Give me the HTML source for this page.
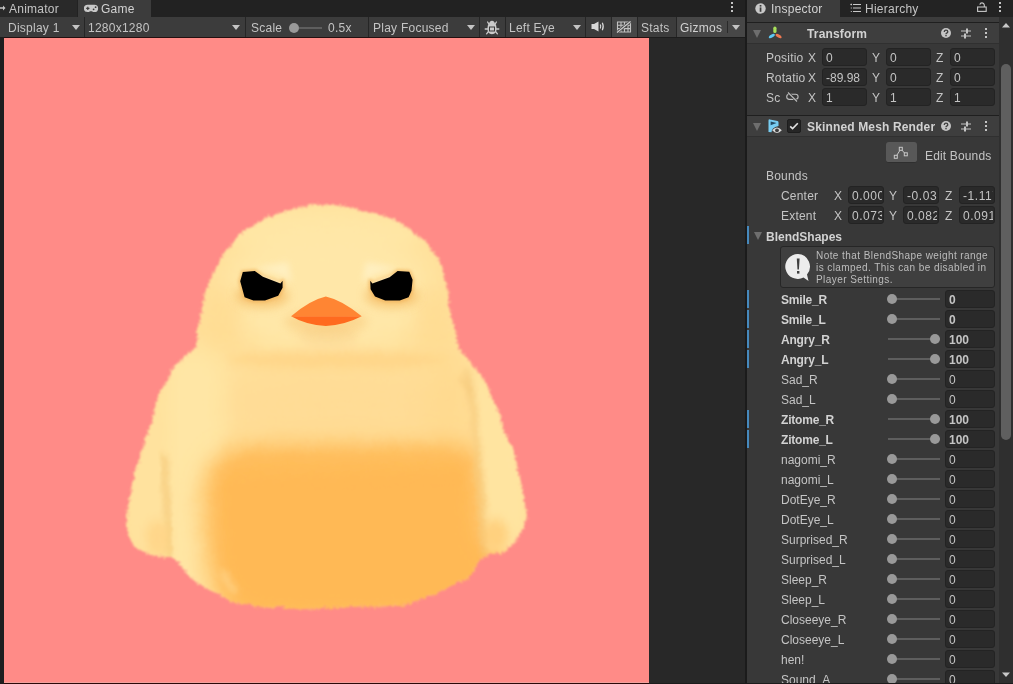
<!DOCTYPE html>
<html><head><meta charset="utf-8">
<style>
*{box-sizing:border-box;margin:0;padding:0}
html,body{width:1013px;height:684px;overflow:hidden;background:#1b1b1b;will-change:transform;font-family:"Liberation Sans",sans-serif;font-size:12px;color:#c4c4c4}
.a{position:absolute}
.t{position:absolute;white-space:nowrap;line-height:14px;margin-top:1px}
.sep{position:absolute;top:17px;height:20px;width:1px;background:#262626}
.fld{position:absolute;background:#2a2a2a;border:1px solid #232323;border-radius:3px;height:18px;overflow:hidden}
.fld span{position:absolute;left:3px;top:2px;line-height:14px;color:#c4c4c4;white-space:nowrap}
.b{font-weight:bold;color:#d2d2d2}
.bar{position:absolute;left:747px;width:2px;height:18px;background:#4689bd}
.trk{position:absolute;left:888px;width:52px;height:2px;background:#5e5e5e}
.knob{position:absolute;width:10px;height:10px;border-radius:5px;background:#999}
.dd{position:absolute;width:0;height:0;border-left:4px solid transparent;border-right:4px solid transparent;border-top:5px solid #c4c4c4}
.fo{position:absolute;width:0;height:0;border-left:4.5px solid transparent;border-right:4.5px solid transparent;border-top:8px solid #6e6e6e}
.keb{position:absolute;width:2px;height:10px;background:linear-gradient(#c4c4c4 0 2px,transparent 2px 4px,#c4c4c4 4px 6px,transparent 6px 8px,#c4c4c4 8px 10px)}
</style></head><body>
<div class="a" style="left:0;top:0;width:745px;height:17px;background:#222"></div>
<div class="a" style="left:0;top:0;width:77px;height:17px;background:#292929"></div>
<svg class="a" style="left:0;top:5px" width="6" height="6" viewBox="0 0 6 6"><path d="M0,2.3 H3 V0.5 L5.5,3 L3,5.5 V3.7 H0 Z" fill="#c4c4c4"/></svg>
<div class="t" style="left:9px;top:1px;letter-spacing:0.25px">Animator</div>
<div class="a" style="left:78px;top:0;width:73px;height:17px;background:#3c3c3c"></div>
<svg class="a" style="left:84px;top:4px" width="15" height="9" viewBox="0 0 15 9"><path d="M3.5,0.8 H10.5 A3.6,3.6 0 0 1 10.5,8 H9 L8,7.2 H6 L5,8 H3.5 A3.6,3.6 0 0 1 3.5,0.8 Z" fill="#c8c8c8"/><path d="M2.2,4.4 H5.4 M3.8,2.8 V6" stroke="#3a3a3a" stroke-width="1.2"/><circle cx="11.6" cy="3.2" r="0.9" fill="#3a3a3a"/><circle cx="9.6" cy="5.3" r="0.9" fill="#3a3a3a"/></svg>
<div class="t" style="left:101px;top:1px;color:#d2d2d2;letter-spacing:0.25px">Game</div>
<div class="keb" style="left:731px;top:2px"></div>
<div class="a" style="left:0;top:17px;width:745px;height:20px;background:#3c3c3c"></div>
<div class="a" style="left:612px;top:17px;width:25px;height:20px;background:#474747"></div>
<div class="a" style="left:677px;top:17px;width:68px;height:20px;background:#474747"></div>
<div class="sep" style="left:84px"></div>
<div class="sep" style="left:245px"></div>
<div class="sep" style="left:368px"></div>
<div class="sep" style="left:479px"></div>
<div class="sep" style="left:505px"></div>
<div class="sep" style="left:585px"></div>
<div class="sep" style="left:611px"></div>
<div class="sep" style="left:637px"></div>
<div class="sep" style="left:676px"></div>
<div class="a" style="left:727px;top:21px;width:1px;height:12px;background:#2a2a2a"></div>
<div class="t" style="left:8px;top:20px;letter-spacing:0.25px">Display 1</div>
<div class="dd" style="left:72px;top:25px"></div>
<div class="t" style="left:88px;top:20px;letter-spacing:0.25px">1280x1280</div>
<div class="dd" style="left:232px;top:25px"></div>
<div class="t" style="left:251px;top:20px;letter-spacing:0.25px">Scale</div>
<div class="a" style="left:299px;top:27px;width:23px;height:2px;background:#5e5e5e"></div>
<div class="knob" style="left:289px;top:23px"></div>
<div class="t" style="left:328px;top:20px;letter-spacing:0.25px">0.5x</div>
<div class="t" style="left:373px;top:20px;letter-spacing:0.25px">Play Focused</div>
<div class="dd" style="left:467px;top:25px"></div>
<svg class="a" style="left:484px;top:19px" width="16" height="16" viewBox="0 0 16 16"><path d="M3.6,3 L5.2,5.6 M12.4,3 L10.8,5.6 M1.2,10 H3.6 M14.8,10 H12.4 M2.6,14.8 L4.3,12.6 M13.4,14.8 L11.7,12.6" stroke="#cacaca" stroke-width="1.3" stroke-linecap="round"/><path d="M5.5,3.2 Q8,0.3 10.5,3.2 L10.8,4.6 Q12.6,5.8 12.6,9.5 Q12.6,15.2 8,15.2 Q3.4,15.2 3.4,9.5 Q3.4,5.8 5.2,4.6 Z" fill="#cacaca"/><rect x="5.5" y="8" width="5" height="4" fill="none" stroke="#3c3c3c" stroke-width="1"/></svg>
<div class="t" style="left:509px;top:20px;letter-spacing:0.25px">Left Eye</div>
<div class="dd" style="left:573px;top:25px"></div>
<svg class="a" style="left:591px;top:21px" width="14" height="11" viewBox="0 0 14 11"><path d="M0.5,3 H3 L7.5,0.5 V10.5 L3,8 H0.5 Z" fill="#d8d8d8"/><path d="M9.3,3.6 Q10.2,5.5 9.3,7.4 M11.3,1.8 Q13.2,5.5 11.3,9.2" stroke="#d8d8d8" stroke-width="1.2" fill="none"/></svg>
<svg class="a" style="left:616px;top:21px" width="16" height="12" viewBox="0 0 16 12"><path d="M1,1 H15 M1,4.3 H15 M1,7.6 H15 M1,11 H15 M1.5,1 V11 M5,1 V11 M8.5,1 V11 M12,1 V11 M14.5,1 V11" stroke="#cfcfcf" stroke-width="1.1" opacity="0.9"/><path d="M1,11.5 L14.5,0.5" stroke="#474747" stroke-width="2.6"/><path d="M1,11.5 L14.5,0.5" stroke="#cfcfcf" stroke-width="1.1"/></svg>
<div class="t" style="left:641px;top:20px;letter-spacing:0.25px">Stats</div>
<div class="t" style="left:680px;top:20px;letter-spacing:0.25px;color:#d2d2d2">Gizmos</div>
<div class="dd" style="left:732px;top:25px"></div>
<div class="a" style="left:0;top:37px;width:745px;height:647px;background:#282828"></div>
<div class="a" style="left:0;top:37px;width:4px;height:647px;background:#1e1e1e"></div>
<div class="a" style="left:0;top:37px;width:745px;height:1px;background:#1d1d1d"></div>
<div class="a" style="left:4px;top:37px;width:645px;height:1px;background:#241010"></div>
<div class="a" style="left:4px;top:38px;width:645px;height:646px;background:#ff8b87"></div>
<svg class="a" style="left:0;top:0" width="1013" height="684" viewBox="0 0 1013 684">
<defs>
<filter id="fur" x="-10%" y="-10%" width="120%" height="120%"><feTurbulence type="fractalNoise" baseFrequency="0.05" numOctaves="2" seed="8" result="n1"/><feDisplacementMap in="SourceGraphic" in2="n1" scale="5" xChannelSelector="R" yChannelSelector="G" result="d1"/><feTurbulence type="fractalNoise" baseFrequency="0.5" numOctaves="2" seed="5" result="n"/><feDisplacementMap in="d1" in2="n" scale="7" xChannelSelector="R" yChannelSelector="G" result="d"/><feGaussianBlur in="d" stdDeviation="0.8"/></filter>
<filter id="b15" x="-50%" y="-50%" width="200%" height="200%"><feGaussianBlur stdDeviation="1.5"/></filter>
<filter id="b30" x="-50%" y="-50%" width="200%" height="200%"><feGaussianBlur stdDeviation="3"/></filter>
<filter id="b50" x="-50%" y="-50%" width="200%" height="200%"><feGaussianBlur stdDeviation="5"/></filter>
<filter id="b80" x="-50%" y="-50%" width="200%" height="200%"><feGaussianBlur stdDeviation="8"/></filter>
<filter id="b100" x="-50%" y="-50%" width="200%" height="200%"><feGaussianBlur stdDeviation="10"/></filter>
<filter id="b120" x="-50%" y="-50%" width="200%" height="200%"><feGaussianBlur stdDeviation="12"/></filter>
<filter id="b160" x="-50%" y="-50%" width="200%" height="200%"><feGaussianBlur stdDeviation="16"/></filter>
<clipPath id="cp"><path d="M328.0,205.0 C336.6,205.2 343.2,205.6 354.0,208.0 C364.8,210.4 381.8,214.7 392.5,219.4 C403.2,224.1 410.3,229.4 418.0,236.0 C425.7,242.6 434.0,251.3 438.7,259.0 C443.4,266.7 444.7,275.2 446.4,282.0 C448.1,288.8 448.1,294.0 449.0,300.0 C449.9,306.0 450.8,311.3 452.0,318.0 C453.2,324.7 454.5,334.3 456.0,340.0 C457.5,345.7 458.7,348.3 461.0,352.0 C463.3,355.7 466.8,358.3 470.0,362.0 C473.2,365.7 477.0,369.7 480.0,374.0 C483.0,378.3 485.5,382.8 488.0,388.0 C490.5,393.2 492.8,399.7 495.0,405.0 C497.2,410.3 499.3,415.8 501.0,420.0 C502.7,424.2 502.7,423.7 505.0,430.0 C507.3,436.3 511.9,448.7 514.7,458.0 C517.5,467.3 519.9,476.8 521.7,486.0 C523.6,495.2 525.6,506.2 525.8,513.0 C526.0,519.8 524.6,522.3 523.0,527.0 C521.4,531.7 519.5,536.7 516.0,541.0 C512.5,545.3 507.5,550.3 502.0,553.0 C496.5,555.7 488.0,553.5 483.0,557.0 C478.0,560.5 475.8,570.0 472.0,574.0 C468.2,578.0 466.6,577.7 460.5,581.0 C454.4,584.3 444.4,590.3 435.6,594.0 C426.8,597.7 415.2,601.0 407.8,603.0 C400.4,605.0 403.6,605.2 391.0,606.0 C378.4,606.8 348.8,607.7 332.0,608.0 C315.2,608.3 302.2,608.2 290.0,608.0 C277.8,607.8 267.8,607.8 259.0,607.0 C250.2,606.2 243.8,605.2 237.0,603.0 C230.2,600.8 224.5,597.3 218.0,594.0 C211.5,590.7 203.3,586.5 198.0,583.0 C192.7,579.5 190.2,577.3 186.0,573.0 C181.8,568.7 177.9,559.8 173.0,557.0 C168.1,554.2 162.2,557.2 156.7,556.0 C151.2,554.8 144.4,552.5 140.0,550.0 C135.6,547.5 132.5,544.8 130.3,541.0 C128.1,537.2 127.2,531.7 126.7,527.0 C126.2,522.3 126.7,519.8 127.5,513.0 C128.3,506.2 129.6,495.2 131.7,486.0 C133.8,476.8 137.3,467.3 140.0,458.0 C142.7,448.7 145.9,436.3 148.0,430.0 C150.1,423.7 151.3,424.2 152.5,420.0 C153.7,415.8 153.4,410.3 155.0,405.0 C156.6,399.7 159.1,393.8 162.0,388.0 C164.9,382.2 168.8,375.3 172.6,370.0 C176.4,364.7 181.3,359.7 185.0,356.0 C188.7,352.3 193.0,351.5 195.0,348.0 C197.0,344.5 196.4,340.0 197.2,335.0 C198.0,330.0 199.1,323.8 200.0,318.0 C200.9,312.2 200.8,306.0 202.5,300.0 C204.2,294.0 207.0,288.8 210.0,282.0 C213.0,275.2 215.8,266.7 220.5,259.0 C225.2,251.3 231.2,242.6 238.5,236.0 C245.8,229.4 253.3,224.3 264.0,219.4 C274.7,214.5 292.0,208.9 302.7,206.5 C313.4,204.1 319.4,204.8 328.0,205.0Z"/></clipPath>
</defs>
<g filter="url(#fur)">
<path d="M328.0,205.0 C336.6,205.2 343.2,205.6 354.0,208.0 C364.8,210.4 381.8,214.7 392.5,219.4 C403.2,224.1 410.3,229.4 418.0,236.0 C425.7,242.6 434.0,251.3 438.7,259.0 C443.4,266.7 444.7,275.2 446.4,282.0 C448.1,288.8 448.1,294.0 449.0,300.0 C449.9,306.0 450.8,311.3 452.0,318.0 C453.2,324.7 454.5,334.3 456.0,340.0 C457.5,345.7 458.7,348.3 461.0,352.0 C463.3,355.7 466.8,358.3 470.0,362.0 C473.2,365.7 477.0,369.7 480.0,374.0 C483.0,378.3 485.5,382.8 488.0,388.0 C490.5,393.2 492.8,399.7 495.0,405.0 C497.2,410.3 499.3,415.8 501.0,420.0 C502.7,424.2 502.7,423.7 505.0,430.0 C507.3,436.3 511.9,448.7 514.7,458.0 C517.5,467.3 519.9,476.8 521.7,486.0 C523.6,495.2 525.6,506.2 525.8,513.0 C526.0,519.8 524.6,522.3 523.0,527.0 C521.4,531.7 519.5,536.7 516.0,541.0 C512.5,545.3 507.5,550.3 502.0,553.0 C496.5,555.7 488.0,553.5 483.0,557.0 C478.0,560.5 475.8,570.0 472.0,574.0 C468.2,578.0 466.6,577.7 460.5,581.0 C454.4,584.3 444.4,590.3 435.6,594.0 C426.8,597.7 415.2,601.0 407.8,603.0 C400.4,605.0 403.6,605.2 391.0,606.0 C378.4,606.8 348.8,607.7 332.0,608.0 C315.2,608.3 302.2,608.2 290.0,608.0 C277.8,607.8 267.8,607.8 259.0,607.0 C250.2,606.2 243.8,605.2 237.0,603.0 C230.2,600.8 224.5,597.3 218.0,594.0 C211.5,590.7 203.3,586.5 198.0,583.0 C192.7,579.5 190.2,577.3 186.0,573.0 C181.8,568.7 177.9,559.8 173.0,557.0 C168.1,554.2 162.2,557.2 156.7,556.0 C151.2,554.8 144.4,552.5 140.0,550.0 C135.6,547.5 132.5,544.8 130.3,541.0 C128.1,537.2 127.2,531.7 126.7,527.0 C126.2,522.3 126.7,519.8 127.5,513.0 C128.3,506.2 129.6,495.2 131.7,486.0 C133.8,476.8 137.3,467.3 140.0,458.0 C142.7,448.7 145.9,436.3 148.0,430.0 C150.1,423.7 151.3,424.2 152.5,420.0 C153.7,415.8 153.4,410.3 155.0,405.0 C156.6,399.7 159.1,393.8 162.0,388.0 C164.9,382.2 168.8,375.3 172.6,370.0 C176.4,364.7 181.3,359.7 185.0,356.0 C188.7,352.3 193.0,351.5 195.0,348.0 C197.0,344.5 196.4,340.0 197.2,335.0 C198.0,330.0 199.1,323.8 200.0,318.0 C200.9,312.2 200.8,306.0 202.5,300.0 C204.2,294.0 207.0,288.8 210.0,282.0 C213.0,275.2 215.8,266.7 220.5,259.0 C225.2,251.3 231.2,242.6 238.5,236.0 C245.8,229.4 253.3,224.3 264.0,219.4 C274.7,214.5 292.0,208.9 302.7,206.5 C313.4,204.1 319.4,204.8 328.0,205.0Z" fill="#ffe09a"/>
<g clip-path="url(#cp)">
<ellipse cx="325" cy="232" rx="100" ry="26" fill="#ffe6a4" filter="url(#b100)"/>
<ellipse cx="327" cy="292" rx="108" ry="62" fill="#ffe7a8" filter="url(#b120)"/>
<ellipse cx="222" cy="318" rx="18" ry="34" fill="#ffdc92" opacity="0.8" filter="url(#b100)"/>
<ellipse cx="434" cy="318" rx="18" ry="34" fill="#ffdc92" opacity="0.8" filter="url(#b100)"/>
<ellipse cx="345" cy="405" rx="130" ry="38" fill="#ffdc95" filter="url(#b160)"/>
<ellipse cx="338" cy="360" rx="112" ry="8" fill="#ffd486" opacity="0.85" filter="url(#b50)"/>
<ellipse cx="328" cy="336" rx="30" ry="10" fill="#fbd590" opacity="0.6" filter="url(#b50)"/>
<rect x="165" y="350" width="58" height="265" rx="20" fill="#ffe6a5" filter="url(#b100)"/>
<ellipse cx="448" cy="405" rx="22" ry="50" fill="#ffd98e" opacity="0.8" filter="url(#b120)"/>
<path d="M203,500 C203,462 225,447 262,446 L455,445 C476,445 482,455 483,478 L486,540 L500,545 L510,570 L470,625 L245,625 C226,612 214,598 208,570 Z" fill="#ffb955" filter="url(#b120)"/>
<path d="M225,470 C235,455 262,452 300,453 L450,452 L455,470 L230,478 Z" fill="#ffbd5c" opacity="0.6" filter="url(#b80)"/>
<path d="M222,572 L236,592" stroke="#ffe0a0" stroke-width="6" opacity="0.6" filter="url(#b30)"/>
<path d="M127,510 Q130,460 160,400 Q166,470 170,556 Q145,556 132,540 Z" fill="#ffe29e" filter="url(#b30)"/>
<path d="M163,455 Q168,500 169,556" stroke="#f0bf6c" stroke-width="4" fill="none" opacity="0.9" filter="url(#b30)"/>
<ellipse cx="158" cy="538" rx="11" ry="18" fill="#ffd282" opacity="0.7" filter="url(#b50)"/>
<path d="M470,362 Q505,400 522,470 Q530,520 515,548 L486,552 Q480,450 470,362 Z" fill="#ffe4a0" filter="url(#b50)"/>
<path d="M468,370 Q480,460 484,556" stroke="#f2c070" stroke-width="3.5" fill="none" opacity="0.9" filter="url(#b30)"/>
<ellipse cx="496" cy="535" rx="12" ry="16" fill="#ffc870" opacity="0.7" filter="url(#b50)"/>
<path d="M460,378 Q470,390 472,395" stroke="#f2c070" stroke-width="3" fill="none" opacity="0.7" filter="url(#b30)"/>
</g></g>
<ellipse cx="262" cy="296" rx="27" ry="12" fill="#f5bd66" opacity="0.7" filter="url(#b50)"/>
<ellipse cx="392" cy="296" rx="27" ry="12" fill="#f5bd66" opacity="0.7" filter="url(#b50)"/>
<path d="M255,268 Q275,272 292,282 L288,262 Z" fill="#fff2c8" opacity="0.75" filter="url(#b30)"/>
<path d="M398,268 Q378,272 362,282 L366,262 Z" fill="#fff2c8" opacity="0.75" filter="url(#b30)"/>
<path d="M242.8,272 L254.8,271 L262.9,276.8 L280.4,283.4 L282.6,280.8 L282.6,287.8 L278.2,295.8 L265,300.5 L253.4,300.5 L244.6,297.3 L240.2,281.2 Z" fill="none" stroke="#f0b058" stroke-width="4" stroke-linejoin="round" opacity="0.6" filter="url(#b15)"/>
<path d="M370.2,280.8 L372.4,283.4 L389.6,277.2 L397.6,271 L409.3,271.7 L412.6,279.7 L411.5,290.7 L408.6,297.3 L399.8,300.5 L385.2,300.5 L375,296.5 L370.6,289.2 Z" fill="none" stroke="#f0b058" stroke-width="4" stroke-linejoin="round" opacity="0.6" filter="url(#b15)"/>
<path d="M258,276 L281,284" stroke="#fff2c8" stroke-width="3" opacity="0.9" filter="url(#b15)"/>
<path d="M395,276 L372,284" stroke="#fff2c8" stroke-width="3" opacity="0.9" filter="url(#b15)"/>
<ellipse cx="326" cy="322" rx="42" ry="12" fill="#f6c474" opacity="0.45" filter="url(#b50)"/>
<path d="M242.8,272 L254.8,271 L262.9,276.8 L280.4,283.4 L282.6,280.8 L282.6,287.8 L278.2,295.8 L265,300.5 L253.4,300.5 L244.6,297.3 L240.2,281.2 Z" fill="#000"/>
<path d="M370.2,280.8 L372.4,283.4 L389.6,277.2 L397.6,271 L409.3,271.7 L412.6,279.7 L411.5,290.7 L408.6,297.3 L399.8,300.5 L385.2,300.5 L375,296.5 L370.6,289.2 Z" fill="#000"/>
<path d="M291.1,316.3 Q310,300 325.8,296.5 Q342,300 361.7,316.3 Z" fill="#ff8533"/>
<path d="M291.1,316.3 L361.7,316.3 Q345,325 325.8,326 Q306,325 291.1,316.3 Z" fill="#ff6a1f"/>
</svg>
<div class="a" style="left:747px;top:0;width:266px;height:684px;background:#383838"></div>
<div class="a" style="left:747px;top:0;width:266px;height:17px;background:#232323"></div>
<div class="a" style="left:747px;top:0;width:93px;height:22px;background:#3c3c3c"></div>
<div class="a" style="left:840px;top:17px;width:173px;height:5px;background:#3c3c3c"></div>
<svg class="a" style="left:755px;top:3px" width="11" height="11" viewBox="0 0 11 11"><circle cx="5.5" cy="5.5" r="5.2" fill="#c8c8c8"/><rect x="4.7" y="4.4" width="1.7" height="4.4" fill="#3c3c3c"/><rect x="4.7" y="2" width="1.7" height="1.6" fill="#3c3c3c"/></svg>
<div class="t" style="left:771px;top:1px;color:#d2d2d2;letter-spacing:0.25px">Inspector</div>
<svg class="a" style="left:850px;top:3px" width="11" height="10" viewBox="0 0 11 10"><path d="M3,1.5 H11 M3,5 H11 M3,8.5 H11" stroke="#c8c8c8" stroke-width="1.2"/><path d="M0.5,1.5 H2 M1.25,0.7 V2.3 M0.8,5 H1.8 M0.8,8.5 H1.8" stroke="#c8c8c8" stroke-width="1"/></svg>
<div class="t" style="left:865px;top:1px;letter-spacing:0.25px">Hierarchy</div>
<svg class="a" style="left:977px;top:2px" width="10" height="10" viewBox="0 0 10 10"><rect x="0.6" y="5" width="8.6" height="4.4" fill="none" stroke="#c8c8c8" stroke-width="1.1"/><path d="M7.3,5 V2.8 A2.3,2.3 0 0 0 2.8,2.6" fill="none" stroke="#c8c8c8" stroke-width="1.1"/></svg>
<div class="keb" style="left:999px;top:2px"></div>
<div class="a" style="left:747px;top:22px;width:252px;height:1px;background:#1f1f1f"></div>
<div class="a" style="left:747px;top:23px;width:252px;height:20px;background:#3e3e3e"></div>
<div class="a" style="left:747px;top:43px;width:252px;height:1px;background:#303030"></div>
<div class="fo" style="left:753px;top:30px"></div>
<svg class="a" style="left:768px;top:26px" width="15" height="14" viewBox="0 0 15 14"><rect x="5.3" y="0.6" width="3.2" height="6.5" rx="1.6" fill="#a8e05a"/><ellipse cx="3.8" cy="10" rx="3.4" ry="1.5" transform="rotate(-32 3.8 10)" fill="#5ec8f2"/><ellipse cx="10.6" cy="10" rx="3.4" ry="1.5" transform="rotate(32 10.6 10)" fill="#f07850"/></svg>
<div class="t b" style="left:807px;top:26px;letter-spacing:0.15px">Transform</div>
<svg class="a" style="left:941px;top:28px" width="10" height="10" viewBox="0 0 10 10"><circle cx="5" cy="5" r="5" fill="#c4c4c4"/><path d="M3.3,3.9 Q3.3,2.2 5,2.2 Q6.8,2.2 6.8,3.7 Q6.8,4.6 5.6,5.1 Q5,5.4 5,6.3" fill="none" stroke="#3e3e3e" stroke-width="1.3"/><rect x="4.3" y="7" width="1.4" height="1.3" fill="#3e3e3e"/></svg>
<svg class="a" style="left:961px;top:28px" width="10" height="11" viewBox="0 0 10 11"><path d="M0,3 H5 M7,3 H10 M0,8 H3 M5,8 H10" stroke="#c4c4c4" stroke-width="1.2"/><rect x="5" y="0.5" width="2" height="5" fill="#c4c4c4"/><rect x="3" y="5.5" width="2" height="5" fill="#c4c4c4"/></svg>
<div class="keb" style="left:985px;top:28px"></div>
<div class="t" style="left:766px;top:50px;letter-spacing:0.2px">Positio</div>
<div class="t" style="left:808px;top:50px">X</div>
<div class="fld" style="left:822px;top:48px;width:45px"><span>0</span></div>
<div class="t" style="left:872px;top:50px">Y</div>
<div class="fld" style="left:886px;top:48px;width:45px"><span>0</span></div>
<div class="t" style="left:936px;top:50px">Z</div>
<div class="fld" style="left:950px;top:48px;width:45px"><span>0</span></div>
<div class="t" style="left:766px;top:70px;letter-spacing:0.2px">Rotatio</div>
<div class="t" style="left:808px;top:70px">X</div>
<div class="fld" style="left:822px;top:68px;width:45px"><span>-89.98</span></div>
<div class="t" style="left:872px;top:70px">Y</div>
<div class="fld" style="left:886px;top:68px;width:45px"><span>0</span></div>
<div class="t" style="left:936px;top:70px">Z</div>
<div class="fld" style="left:950px;top:68px;width:45px"><span>0</span></div>
<div class="t" style="left:766px;top:90px;letter-spacing:0.2px">Sc</div>
<div class="t" style="left:808px;top:90px">X</div>
<div class="fld" style="left:822px;top:88px;width:45px"><span>1</span></div>
<div class="t" style="left:872px;top:90px">Y</div>
<div class="fld" style="left:886px;top:88px;width:45px"><span>1</span></div>
<div class="t" style="left:936px;top:90px">Z</div>
<div class="fld" style="left:950px;top:88px;width:45px"><span>1</span></div>
<svg class="a" style="left:786px;top:92px" width="13" height="10" viewBox="0 0 13 10"><rect x="0.7" y="2.2" width="11.4" height="5.2" rx="2.6" fill="none" stroke="#bdbdbd" stroke-width="1.1"/><path d="M2,0.5 L11,9.5" stroke="#383838" stroke-width="2.4"/><path d="M2,0.5 L11,9.5" stroke="#bdbdbd" stroke-width="1.1"/></svg>
<div class="a" style="left:747px;top:115px;width:252px;height:1px;background:#1f1f1f"></div>
<div class="a" style="left:747px;top:116px;width:252px;height:20px;background:#3e3e3e"></div>
<div class="a" style="left:747px;top:136px;width:252px;height:1px;background:#303030"></div>
<div class="fo" style="left:753px;top:123px"></div>
<svg class="a" style="left:767px;top:118px" width="17" height="17" viewBox="0 0 17 17"><path d="M1.5,14 V2.5 Q1.5,1.2 2.8,1.4 L10.5,3 Q11.5,3.2 11.5,4.2 V8 Q8,8.5 6,10.5 Q4.5,12 4.5,14.2 Z" fill="#78cdf2"/><path d="M3.6,3.4 L9.6,5 L3.6,7.2 Z" fill="#234a63"/><path d="M5.2,12.3 Q10,6.8 14.8,12.3 Q10,17.5 5.2,12.3 Z" fill="#d9d9d9"/><circle cx="10" cy="12.3" r="1.9" fill="#3e3e3e"/></svg><div class="a" style="left:787px;top:119px;width:14px;height:14px;background:#262626;border:1px solid #1d1d1d;border-radius:2px"></div><svg class="a" style="left:787px;top:119px" width="14" height="14" viewBox="0 0 14 14"><path d="M3.2,7.3 L5.6,9.6 L10.8,4.2" fill="none" stroke="#e4e4e4" stroke-width="1.6"/></svg>
<div class="t b" style="left:807px;top:119px;letter-spacing:0.15px">Skinned Mesh Render</div>
<svg class="a" style="left:941px;top:121px" width="10" height="10" viewBox="0 0 10 10"><circle cx="5" cy="5" r="5" fill="#c4c4c4"/><path d="M3.3,3.9 Q3.3,2.2 5,2.2 Q6.8,2.2 6.8,3.7 Q6.8,4.6 5.6,5.1 Q5,5.4 5,6.3" fill="none" stroke="#3e3e3e" stroke-width="1.3"/><rect x="4.3" y="7" width="1.4" height="1.3" fill="#3e3e3e"/></svg>
<svg class="a" style="left:961px;top:121px" width="10" height="11" viewBox="0 0 10 11"><path d="M0,3 H5 M7,3 H10 M0,8 H3 M5,8 H10" stroke="#c4c4c4" stroke-width="1.2"/><rect x="5" y="0.5" width="2" height="5" fill="#c4c4c4"/><rect x="3" y="5.5" width="2" height="5" fill="#c4c4c4"/></svg>
<div class="keb" style="left:985px;top:121px"></div>
<div class="a" style="left:886px;top:142px;width:31px;height:21px;border-radius:3px;background:#585858;border-bottom:1px solid #2f2f2f"></div>
<svg class="a" style="left:893px;top:146px" width="16" height="14" viewBox="0 0 16 14"><path d="M3,10.5 L7.8,3 L12.5,8" fill="none" stroke="#c8c8c8" stroke-width="1"/><rect x="6.3" y="1.3" width="3" height="3" fill="#585858" stroke="#c8c8c8" stroke-width="1"/><rect x="1.3" y="9.3" width="3" height="3" fill="#585858" stroke="#c8c8c8" stroke-width="1"/><rect x="11.3" y="6.8" width="3" height="3" fill="#585858" stroke="#c8c8c8" stroke-width="1"/></svg>
<div class="t" style="left:925px;top:148px;letter-spacing:0.15px">Edit Bounds</div>
<div class="t" style="left:766px;top:168px;letter-spacing:0.2px">Bounds</div>
<div class="t" style="left:781px;top:188px;letter-spacing:0.2px">Center</div>
<div class="t" style="left:834px;top:188px">X</div>
<div class="fld" style="left:848px;top:186px;width:36px"><span style="top:2px;width:30px;overflow:hidden;letter-spacing:0.55px">0.000</span></div>
<div class="t" style="left:889px;top:188px">Y</div>
<div class="fld" style="left:903px;top:186px;width:36px"><span style="top:2px;width:30px;overflow:hidden;letter-spacing:0.55px">-0.03</span></div>
<div class="t" style="left:945px;top:188px">Z</div>
<div class="fld" style="left:959px;top:186px;width:36px"><span style="top:2px;width:30px;overflow:hidden;letter-spacing:0.55px">-1.117</span></div>
<div class="t" style="left:781px;top:208px;letter-spacing:0.2px">Extent</div>
<div class="t" style="left:834px;top:208px">X</div>
<div class="fld" style="left:848px;top:206px;width:36px"><span style="top:2px;width:30px;overflow:hidden;letter-spacing:0.55px">0.073</span></div>
<div class="t" style="left:889px;top:208px">Y</div>
<div class="fld" style="left:903px;top:206px;width:36px"><span style="top:2px;width:30px;overflow:hidden;letter-spacing:0.55px">0.082</span></div>
<div class="t" style="left:945px;top:208px">Z</div>
<div class="fld" style="left:959px;top:206px;width:36px"><span style="top:2px;width:30px;overflow:hidden;letter-spacing:0.55px">0.091</span></div>
<div class="bar" style="top:226px;height:18px"></div>
<div class="fo" style="left:754px;top:232px"></div>
<div class="t b" style="left:766px;top:229px">BlendShapes</div>
<div class="a" style="left:780px;top:246px;width:215px;height:42px;border-radius:3px;background:#3f3f3f;border:1px solid #262626"></div>
<svg class="a" style="left:785px;top:253px" width="28" height="29" viewBox="0 0 28 29"><path d="M13,1 A12.5,12.5 0 1 0 18.5,24.6 L23.5,28 L22,21.5 A12.5,12.5 0 0 0 13,1 Z" fill="#ececec"/><path d="M11.8,5.5 H14.6 L13.9,16.5 H12.5 Z" fill="#3f3f3f"/><rect x="12" y="18" width="2.4" height="2.6" fill="#3f3f3f"/></svg>
<div class="a" style="left:816px;top:250px;font-size:10px;line-height:11.85px;letter-spacing:0.43px;color:#bdbdbd;white-space:nowrap">Note that BlendShape weight range<br>is clamped. This can be disabled in<br>Player Settings.</div>
<div class="bar" style="top:290px"></div>
<div class="t b" style="left:781px;top:292px;letter-spacing:-0.2px">Smile_R</div>
<div class="trk" style="top:298px"></div>
<div class="knob" style="left:887px;top:294px"></div>
<div class="fld" style="left:945px;top:290px;width:50px"><span class="b">0</span></div>
<div class="bar" style="top:310px"></div>
<div class="t b" style="left:781px;top:312px;letter-spacing:-0.2px">Smile_L</div>
<div class="trk" style="top:318px"></div>
<div class="knob" style="left:887px;top:314px"></div>
<div class="fld" style="left:945px;top:310px;width:50px"><span class="b">0</span></div>
<div class="bar" style="top:330px"></div>
<div class="t b" style="left:781px;top:332px;letter-spacing:-0.2px">Angry_R</div>
<div class="trk" style="top:338px"></div>
<div class="knob" style="left:930px;top:334px"></div>
<div class="fld" style="left:945px;top:330px;width:50px"><span class="b">100</span></div>
<div class="bar" style="top:350px"></div>
<div class="t b" style="left:781px;top:352px;letter-spacing:-0.2px">Angry_L</div>
<div class="trk" style="top:358px"></div>
<div class="knob" style="left:930px;top:354px"></div>
<div class="fld" style="left:945px;top:350px;width:50px"><span class="b">100</span></div>
<div class="t" style="left:781px;top:372px">Sad_R</div>
<div class="trk" style="top:378px"></div>
<div class="knob" style="left:887px;top:374px"></div>
<div class="fld" style="left:945px;top:370px;width:50px"><span class="">0</span></div>
<div class="t" style="left:781px;top:392px">Sad_L</div>
<div class="trk" style="top:398px"></div>
<div class="knob" style="left:887px;top:394px"></div>
<div class="fld" style="left:945px;top:390px;width:50px"><span class="">0</span></div>
<div class="bar" style="top:410px"></div>
<div class="t b" style="left:781px;top:412px;letter-spacing:-0.2px">Zitome_R</div>
<div class="trk" style="top:418px"></div>
<div class="knob" style="left:930px;top:414px"></div>
<div class="fld" style="left:945px;top:410px;width:50px"><span class="b">100</span></div>
<div class="bar" style="top:430px"></div>
<div class="t b" style="left:781px;top:432px;letter-spacing:-0.2px">Zitome_L</div>
<div class="trk" style="top:438px"></div>
<div class="knob" style="left:930px;top:434px"></div>
<div class="fld" style="left:945px;top:430px;width:50px"><span class="b">100</span></div>
<div class="t" style="left:781px;top:452px">nagomi_R</div>
<div class="trk" style="top:458px"></div>
<div class="knob" style="left:887px;top:454px"></div>
<div class="fld" style="left:945px;top:450px;width:50px"><span class="">0</span></div>
<div class="t" style="left:781px;top:472px">nagomi_L</div>
<div class="trk" style="top:478px"></div>
<div class="knob" style="left:887px;top:474px"></div>
<div class="fld" style="left:945px;top:470px;width:50px"><span class="">0</span></div>
<div class="t" style="left:781px;top:492px">DotEye_R</div>
<div class="trk" style="top:498px"></div>
<div class="knob" style="left:887px;top:494px"></div>
<div class="fld" style="left:945px;top:490px;width:50px"><span class="">0</span></div>
<div class="t" style="left:781px;top:512px">DotEye_L</div>
<div class="trk" style="top:518px"></div>
<div class="knob" style="left:887px;top:514px"></div>
<div class="fld" style="left:945px;top:510px;width:50px"><span class="">0</span></div>
<div class="t" style="left:781px;top:532px">Surprised_R</div>
<div class="trk" style="top:538px"></div>
<div class="knob" style="left:887px;top:534px"></div>
<div class="fld" style="left:945px;top:530px;width:50px"><span class="">0</span></div>
<div class="t" style="left:781px;top:552px">Surprised_L</div>
<div class="trk" style="top:558px"></div>
<div class="knob" style="left:887px;top:554px"></div>
<div class="fld" style="left:945px;top:550px;width:50px"><span class="">0</span></div>
<div class="t" style="left:781px;top:572px">Sleep_R</div>
<div class="trk" style="top:578px"></div>
<div class="knob" style="left:887px;top:574px"></div>
<div class="fld" style="left:945px;top:570px;width:50px"><span class="">0</span></div>
<div class="t" style="left:781px;top:592px">Sleep_L</div>
<div class="trk" style="top:598px"></div>
<div class="knob" style="left:887px;top:594px"></div>
<div class="fld" style="left:945px;top:590px;width:50px"><span class="">0</span></div>
<div class="t" style="left:781px;top:612px">Closeeye_R</div>
<div class="trk" style="top:618px"></div>
<div class="knob" style="left:887px;top:614px"></div>
<div class="fld" style="left:945px;top:610px;width:50px"><span class="">0</span></div>
<div class="t" style="left:781px;top:632px">Closeeye_L</div>
<div class="trk" style="top:638px"></div>
<div class="knob" style="left:887px;top:634px"></div>
<div class="fld" style="left:945px;top:630px;width:50px"><span class="">0</span></div>
<div class="t" style="left:781px;top:652px">hen!</div>
<div class="trk" style="top:658px"></div>
<div class="knob" style="left:887px;top:654px"></div>
<div class="fld" style="left:945px;top:650px;width:50px"><span class="">0</span></div>
<div class="t" style="left:781px;top:672px">Sound_A</div>
<div class="trk" style="top:678px"></div>
<div class="knob" style="left:887px;top:674px"></div>
<div class="fld" style="left:945px;top:670px;width:50px"><span class="">0</span></div>
<div class="a" style="left:999px;top:17px;width:14px;height:667px;background:#2f2f2f"></div>
<div class="a" style="left:1001px;top:64px;width:10px;height:376px;border-radius:5px;background:#5f5f5f"></div>
<svg class="a" style="left:1001px;top:22px" width="10" height="6" viewBox="0 0 10 6"><path d="M1,5.5 L5,1 L9,5.5 Z" fill="#c8c8c8"/></svg>
<svg class="a" style="left:1001px;top:672px" width="10" height="6" viewBox="0 0 10 6"><path d="M1,0.5 L5,5 L9,0.5 Z" fill="#c8c8c8"/></svg>
<div class="a" style="left:0;top:683px;width:1013px;height:1px;background:#1c1c1c"></div>
<div class="a" style="left:4px;top:682px;width:645px;height:1px;background:#f0a09c"></div>
<div class="a" style="left:4px;top:683px;width:645px;height:1px;background:#2a0808"></div>
</body></html>
